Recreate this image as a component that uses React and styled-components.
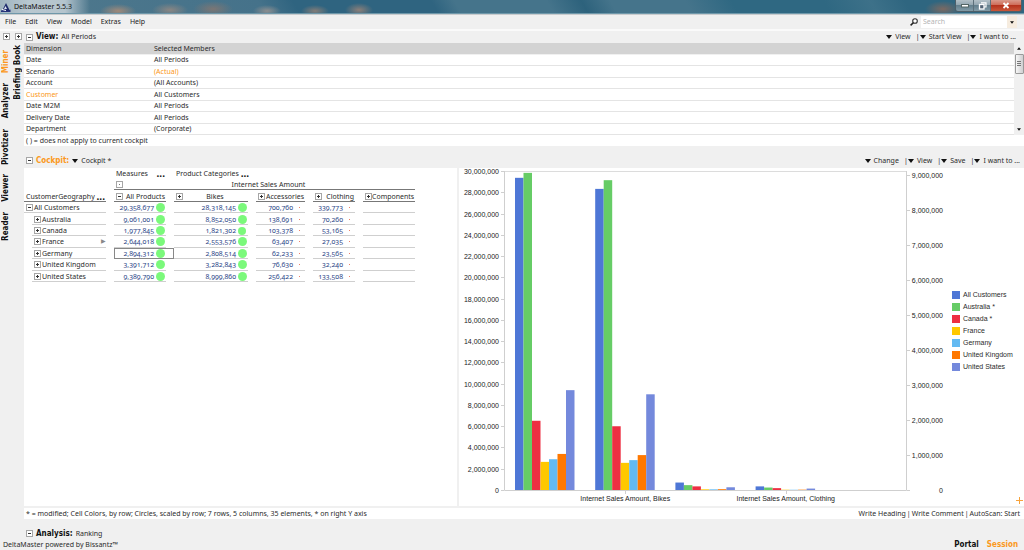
import React, { useState } from "react";
import styled, { createGlobalStyle } from "styled-components";

const GlobalStyle = createGlobalStyle`
  * {
    box-sizing: border-box;
  }

  body {
    margin: 0;
    background: #f0f0f0;
    color: #2b2b2b;
    font-family: "Noto Sans", "Open Sans", sans-serif;
    font-size: 7px;
    line-height: 10px;
  }

  button,
  input {
    margin: 0;
    padding: 0;
    border: 0;
    border-radius: 0;
    background: none;
    color: inherit;
    font: inherit;
  }
`;

const Page = styled.div`
  display: flex;
  flex-direction: column;
  min-height: 100vh;
`;

/* ---------- window frame ---------- */

const TitleBar = styled.header`
  display: flex;
  align-items: flex-start;
  justify-content: space-between;
  height: 15px;
  padding: 0 2px 0 1px;
  border-bottom: 1px solid #c9ccce;
  box-shadow: inset 0 -1px #6f98aa;
  background:
    radial-gradient(ellipse 14px 6px at 267px 11px, #8d8f90, transparent),
    radial-gradient(ellipse 14px 6px at 315px 11px, #847d78, transparent),
    radial-gradient(ellipse 14px 7px at 359px 10px, #8b7f79, transparent),
    radial-gradient(ellipse 18px 7px at 118px 11px, #a08a7a, transparent),
    radial-gradient(ellipse 18px 7px at 170px 10px, #8a8683, transparent),
    radial-gradient(ellipse 20px 8px at 213px 9px, #7c7674, transparent),
    radial-gradient(ellipse 18px 8px at 943px 9px, #7b6962, transparent),
    linear-gradient(90deg, #9fb4bf 0, #b9c8d0 30px, #b4c4cd 65px, transparent 90px),
    linear-gradient(
      60deg,
      #50798d 0,
      #45728a 230px,
      #2f6480 260px,
      #2f6480 380px,
      #45748b 400px,
      #45748b 480px,
      #2d627c 510px,
      #45748b 535px,
      #45748b 600px,
      #2f6882 640px,
      #2f6882 720px,
      #3d7189 760px,
      #2f6680 790px
    );
`;

const AppTitle = styled.div`
  display: flex;
  align-items: center;
  gap: 3px;
  height: 14px;
  color: #111;
`;

const WindowControls = styled.div`
  display: flex;
  border: 1px solid #4d5f69;
  border-top: 0;
  border-radius: 0 0 3px 3px;
  overflow: hidden;
`;

const WindowButton = styled.button`
  display: flex;
  align-items: center;
  justify-content: center;
  width: ${(p) => p.$width}px;
  height: 11px;
  border-right: 1px solid #5d707a;
  background: ${(p) =>
    p.$close
      ? "linear-gradient(#d99a8c 0, #cf6c58 45%, #b5331d 50%, #c9573a 100%)"
      : "linear-gradient(#b3c0c7 0, #93a6b0 45%, #64808e 50%, #829ba7 100%)"};

  &:last-child {
    border-right: 0;
  }
`;

const MenuBar = styled.div`
  display: flex;
  align-items: center;
  justify-content: space-between;
  height: 16px;
  padding-right: 7px;
  border-bottom: 2px solid #fafafa;
`;

const Menu = styled.nav`
  display: flex;
  gap: 9px;
  padding-left: 5px;
  color: #222;
`;

const SearchBox = styled.label`
  display: flex;
  align-items: center;
  gap: 3px;
`;

const SearchField = styled.span`
  display: flex;
  height: 12px;
  background: #fff;

  input {
    width: 86px;
    padding-left: 2px;
    outline: 0;
  }

  input::placeholder {
    color: #b4b4b4;
    opacity: 1;
  }

  button {
    display: flex;
    align-items: center;
    justify-content: center;
    width: 10px;
    background: #f6ecdf;
  }
`;

/* ---------- side rails ---------- */

const Body = styled.div`
  display: flex;
  flex: 1;
`;

const Rail = styled.nav`
  display: flex;
  flex-direction: column;
  align-items: center;
  gap: ${(p) => p.$gap}px;
  width: 12px;
  padding-top: 2px;
`;

const RailButton = styled.button`
  writing-mode: vertical-rl;
  transform: rotate(180deg);
  color: ${(p) => (p.$active ? "#fb9820" : "#111")};
  font-family: "DejaVu Sans Condensed", "DejaVu Sans", sans-serif;
  font-size: 8px;
  font-weight: bold;
  line-height: 10px;
`;

/* ---------- panels ---------- */

const Main = styled.main`
  display: flex;
  flex: 1;
  flex-direction: column;
  min-width: 0;
`;

const PanelHeader = styled.div`
  display: flex;
  align-items: center;
  gap: 3px;
  height: ${(p) => p.$height}px;
  padding: ${(p) => p.$top}px ${(p) => p.$right || 4}px 0 2px;
`;

const PanelTitle = styled.h2`
  margin: 0;
  color: ${(p) => (p.$active ? "#fb9820" : "#111")};
  font-family: "DejaVu Sans Condensed", "DejaVu Sans", sans-serif;
  font-size: 8px;
  line-height: 10px;
`;

const Toolbar = styled.div`
  display: flex;
  margin-left: auto;
`;

const DropButton = styled.button`
  display: flex;
  align-items: center;
  gap: 3px;

  & + &::before {
    content: "|";
    width: 2px;
    margin: 0 -1px 0 5px;
  }
`;

const Toggle = styled.button`
  display: inline-flex;
  width: 7px;
  height: 7px;

  svg {
    display: block;
  }
`;

const ViewArea = styled.div`
  display: flex;
  height: 92px;
`;

const ViewTable = styled.table`
  flex: 1;
  height: 92px;
  border-collapse: collapse;
  background: #fff;

  th,
  td {
    padding: 0 2px;
    border-bottom: 1px solid #e4e4e4;
    font-weight: normal;
    line-height: 9px;
    text-align: left;
  }

  th {
    height: 11px;
    border-bottom-color: #f0f0f0;
    background: #d3d3d3;
  }
`;

const Cell = styled.td`
  color: ${(p) => (p.$active ? "#fb9820" : "inherit")};
`;

const ScrollBar = styled.div`
  display: flex;
  flex-direction: column;
  align-items: center;
  width: 10px;
  background: #f0f0f0;

  button {
    display: flex;
    align-items: center;
    justify-content: center;
    width: 10px;
    height: 11px;
  }
`;

const Thumb = styled.div`
  display: flex;
  align-items: center;
  justify-content: center;
  width: 9px;
  height: 20px;
  margin-bottom: auto;
  border: 1px solid #9a9a9a;
  border-radius: 1px;
  background: linear-gradient(90deg, #f6f6f6, #cfcfd1);
`;

const NoteRow = styled.div`
  display: flex;
  justify-content: space-between;
  padding: 1px 4px 0 2px;
  background: #fff;
`;

const NoteActions = styled.div`
  display: flex;
  gap: 1px;
`;

const CockpitBody = styled.div`
  display: flex;
  flex: 1;
  border-bottom: 2px solid #f0f0f0;
  background: #fff;
`;

/* ---------- pivot table ---------- */

const PivotPane = styled.div`
  width: 435px;
  border-right: 2px solid #f0f0f0;
`;

const PivotTable = styled.table`
  width: 399px;
  height: 114px;
  border-collapse: collapse;
  table-layout: fixed;

  th,
  td {
    padding: 0 8px 0 0;
    font-weight: normal;
    line-height: 9px;
    text-align: left;
    white-space: nowrap;
  }

  thead th {
    height: 11px;
  }

  thead tr:last-child th {
    height: 12px;
  }
`;

const HeadInner = styled.div`
  display: flex;
  align-items: center;
  justify-content: ${(p) => p.$justify || "space-between"};
  padding: 0 1px 0 2px;
`;

const Rule = styled.th`
  background: linear-gradient(#777, #777) left bottom / calc(100% - 8px) 1px
    no-repeat;
`;

const RowHead = styled.th`
  background: linear-gradient(#cfcfcf, #cfcfcf) ${(p) => p.$indent}px 100% /
    calc(100% - ${(p) => p.$indent + 8}px) 1px no-repeat;
`;

const RowLabel = styled.div`
  display: flex;
  align-items: center;
  gap: 1px;
  padding-left: ${(p) => p.$indent + 2}px;

  span {
    margin-left: auto;
    color: #888;
    font-size: 6px;
  }
`;

const ValueCell = styled.td`
  background: linear-gradient(#cfcfcf, #cfcfcf) left bottom / calc(100% - 8px)
    1px no-repeat;
  outline: ${(p) => (p.$selected ? "1px solid #888" : "0")};
  outline-offset: -1px;
`;

const Value = styled.div`
  display: grid;
  grid-template-columns: 1fr 12px;
  align-items: center;
  justify-items: center;
  color: #2f4a8a;

  span {
    justify-self: end;
    font-variant-numeric: oldstyle-nums;
  }
`;

const Dot = styled.i`
  width: ${(p) => p.$size}px;
  height: ${(p) => p.$size}px;
  border-radius: ${(p) => (p.$size > 2 ? "50%" : "0")};
  background: ${(p) => (p.$size > 2 ? "#7bf97b" : "#ee7f68")};
`;

const More = styled.button`
  color: #111;
  font-size: 10px;
  font-weight: bold;
  line-height: 9px;
`;

/* ---------- chart ---------- */

const ChartPane = styled.div`
  display: flex;
  flex: 1;
  min-width: 0;
  font-family: "Liberation Sans", Arial, sans-serif;
`;

const ChartSvg = styled.svg`
  flex: 1;
  min-width: 0;
  align-self: flex-start;
  font-size: 7px;
`;

const ChartSide = styled.div`
  display: flex;
  flex-direction: column;
  width: 75px;
  padding: 0 1px 1px 3px;
`;

const Legend = styled.ul`
  display: flex;
  flex-direction: column;
  gap: 2px;
  margin: auto 0;
  padding: 0 0 4px;
  list-style: none;

  li {
    display: flex;
    align-items: center;
    gap: 3px;
    white-space: nowrap;
  }
`;

const Swatch = styled.i`
  width: 8px;
  height: 8px;
  background: ${(p) => p.$color};
`;

const AddButton = styled.button`
  align-self: flex-end;
  height: 8px;
`;

const StatusBar = styled.footer`
  display: flex;
  align-items: center;
  justify-content: space-between;
  height: 11px;
  padding: 0 6px 0 3px;
`;

const StatusModes = styled.div`
  display: flex;
  gap: 8px;
`;

const ModeButton = styled.button`
  color: ${(p) => (p.$active ? "#fb9820" : "#111")};
  font-family: "DejaVu Sans Condensed", "DejaVu Sans", sans-serif;
  font-size: 8px;
  font-weight: bold;
`;

const members = [
  ["Date", "All Periods"],
  ["Scenario", "(Actual)", "value"],
  ["Account", "(All Accounts)"],
  ["Customer", "All Customers", "name"],
  ["Date M2M", "All Periods"],
  ["Delivery Date", "All Periods"],
  ["Department", "(Corporate)"],
];

const rows = [
  ["All Customers", "29,358,677", "28,318,145", "700,760", "339,773"],
  ["Australia", "9,061,001", "8,852,050", "138,691", "70,260"],
  ["Canada", "1,977,845", "1,821,302", "103,378", "53,165"],
  ["France", "2,644,018", "2,553,576", "63,407", "27,035"],
  ["Germany", "2,894,312", "2,808,514", "62,233", "23,565"],
  ["United Kingdom", "3,391,712", "3,282,843", "76,630", "32,240"],
  ["United States", "9,389,790", "8,999,860", "256,422", "133,508"],
];

// Series marked with * are plotted against the right axis
const series = [
  { name: "All Customers", color: "#4e77d6" },
  { name: "Australia *", color: "#66cc66", right: true },
  { name: "Canada *", color: "#ee2f42", right: true },
  { name: "France", color: "#ffc800" },
  { name: "Germany", color: "#63baf2" },
  { name: "United Kingdom", color: "#ff7800" },
  { name: "United States", color: "#7489dc" },
];

const toNumber = (text) => parseInt(text.replace(/,/g, ""), 10);

function ToggleBox({ open, empty, label }) {
  return (
    <Toggle aria-label={label}>
      <svg width="7" height="7" viewBox="0 0 7 7" aria-hidden="true">
        <rect x="0.5" y="0.5" width="6" height="6" fill="#fff" stroke="#a6a6a6" />
        {empty ? (
          <path d="M3 3.5h1" stroke="#777" />
        ) : (
          <path d={open ? "M2 3.5h3" : "M2 3.5h3M3.5 2v3"} stroke="#333" />
        )}
      </svg>
    </Toggle>
  );
}

function Triangle({ width = 6, height = 4, up }) {
  return (
    <svg width={width} height={height} viewBox="0 0 6 4" aria-hidden="true">
      <path d={up ? "M0 4L3 0L6 4Z" : "M0 0H6L3 4Z"} fill="#111" />
    </svg>
  );
}

function Actions({ items }) {
  return (
    <Toolbar>
      {items.map((item) => (
        <DropButton key={item}>
          <Triangle />
          {item}
        </DropButton>
      ))}
    </Toolbar>
  );
}

function WindowHeader() {
  const [query, setQuery] = useState("");

  return (
    <>
      <TitleBar>
        <AppTitle>
          <svg width="10" height="9" viewBox="0 0 10 9" aria-hidden="true">
            <path d="M5 0L9 8H1Z" fill="#1d2a6b" />
            <path d="M4.500 3L6 6H3Z" fill="#dfe6f2" />
            <path d="M0 7.500L3 6.500L6 8L9.500 6.500V9H0Z" fill="#26337a" />
            <path d="M1 6.500L5 7.500" stroke="#fff" />
          </svg>
          DeltaMaster 5.5.3
        </AppTitle>
        <WindowControls>
          <WindowButton $width={18} aria-label="Minimize">
            <svg width="8" height="4" viewBox="0 0 8 4">
              <rect x="0.5" y="0.5" width="7" height="2.500" fill="#fff" stroke="#566" />
            </svg>
          </WindowButton>
          <WindowButton $width={17} aria-label="Restore">
            <svg width="9" height="8" viewBox="0 0 9 8">
              <path d="M3 0.800H8V5H6" fill="none" stroke="#fff" strokeWidth="1.200" />
              <rect x="1.500" y="2.500" width="4.500" height="4.500" fill="#567" stroke="#fff" strokeWidth="1.300" />
            </svg>
          </WindowButton>
          <WindowButton $width={30} $close aria-label="Close">
            <svg width="8" height="7" viewBox="0 0 8 7">
              <path d="M1.500 1L6.500 6M6.500 1L1.500 6" stroke="#fff" strokeWidth="1.800" />
            </svg>
          </WindowButton>
        </WindowControls>
      </TitleBar>
      <MenuBar>
        <Menu>
          {["File", "Edit", "View", "Model", "Extras", "Help"].map((item) => (
            <button key={item}>{item}</button>
          ))}
        </Menu>
        <SearchBox>
          <svg width="8" height="8" viewBox="0 0 8 8" aria-hidden="true">
            <circle cx="5" cy="3" r="2.300" fill="#fff" stroke="#333" strokeWidth="1.100" />
            <path d="M3.300 4.700L0.600 7.400" stroke="#222" strokeWidth="1.500" />
          </svg>
          <SearchField>
            <input
              aria-label="Search"
              placeholder="Search"
              value={query}
              onChange={(e) => setQuery(e.target.value)}
            />
            <button aria-label="Search options">
              <Triangle width={4} height={3} />
            </button>
          </SearchField>
        </SearchBox>
      </MenuBar>
    </>
  );
}

function ViewPanel() {
  return (
    <section>
      <PanelHeader $height={12} $top={0} $right={8}>
        <ToggleBox open label="Collapse view" />
        <PanelTitle>View:</PanelTitle>
        All Periods
        <Actions items={["View", "Start View", "I want to ..."]} />
      </PanelHeader>
      <ViewArea>
        <ViewTable>
          <colgroup>
            <col style={{ width: 128 }} />
            <col />
          </colgroup>
          <thead>
            <tr>
              <th>Dimension</th>
              <th>Selected Members</th>
            </tr>
          </thead>
          <tbody>
            {members.map(([name, value, mark]) => (
              <tr key={name}>
                <Cell $active={mark === "name"}>{name}</Cell>
                <Cell $active={mark === "value"}>{value}</Cell>
              </tr>
            ))}
          </tbody>
        </ViewTable>
        <ScrollBar>
          <button aria-label="Scroll up">
            <Triangle width={4} height={3} up />
          </button>
          <Thumb>
            <svg width="4" height="6" viewBox="0 0 4 6" aria-hidden="true">
              <path d="M0 0.500H4M0 2.500H4M0 4.500H4" stroke="#777" />
            </svg>
          </Thumb>
          <button aria-label="Scroll down">
            <Triangle width={4} height={3} />
          </button>
        </ScrollBar>
      </ViewArea>
      <NoteRow>( ) = does not apply to current cockpit</NoteRow>
    </section>
  );
}

function Pivot() {
  const dotSize = (row, col) => {
    if (col > 1) return 1;
    return row === 2 && col === 1 ? 8 : 9;
  };

  return (
    <PivotTable>
      <colgroup>
        {[90, 60, 82, 57, 50, 60].map((width, i) => (
          <col key={i} style={{ width }} />
        ))}
      </colgroup>
      <thead>
        <tr>
          <th />
          <th>
            <HeadInner>
              Measures <More aria-label="More measures">...</More>
            </HeadInner>
          </th>
          <th colSpan={4}>
            <HeadInner $justify="flex-start">
              Product Categories&nbsp;
              <More aria-label="More categories">...</More>
            </HeadInner>
          </th>
        </tr>
        <tr>
          <th />
          <Rule colSpan={5}>
            <HeadInner>
              <ToggleBox empty label="Levels" />
              Internet Sales Amount
              <span />
            </HeadInner>
          </Rule>
        </tr>
        <tr>
          <Rule>
            <HeadInner>
              CustomerGeography <More aria-label="More geography">...</More>
            </HeadInner>
          </Rule>
          {["All Products", "Bikes", "Accessories", "Clothing", "Components"].map(
            (name, i) => (
              <Rule key={name} scope="col">
                <HeadInner>
                  <ToggleBox open={i === 0} label={`Toggle ${name}`} />
                  {name}
                  {name === "Bikes" && <span />}
                </HeadInner>
              </Rule>
            )
          )}
        </tr>
      </thead>
      <tbody>
        {rows.map(([name, ...values], row) => {
          const indent = row === 0 ? 0 : 8;
          return (
            <tr key={name}>
              <RowHead scope="row" $indent={indent}>
                <RowLabel $indent={indent}>
                  <ToggleBox open={row === 0} label={`Toggle ${name}`} />
                  {name}
                  {name === "France" && <span>▶</span>}
                </RowLabel>
              </RowHead>
              {values.map((value, col) => (
                <ValueCell key={col} $selected={row === 4 && col === 0}>
                  <Value>
                    <span>{value}</span>
                    <Dot $size={dotSize(row, col)} />
                  </Value>
                </ValueCell>
              ))}
              <ValueCell />
            </tr>
          );
        })}
      </tbody>
    </PivotTable>
  );
}

function Chart() {
  const left = 46;
  const right = 447;
  const top = 3;
  const base = 322;
  const leftUnit = (base - top) / 30000000;
  const rightUnit = 315 / 9000000;
  const step = (right - left) / 5;
  const bar = 8.5;
  const leftTicks = Array.from({ length: 16 }, (_, i) => i * 2000000);
  const rightTicks = Array.from({ length: 10 }, (_, i) => i * 1000000);

  return (
    <ChartSvg viewBox="0 0 490 336" role="img" aria-label="Internet sales by customer geography">
      <path d={`M${left} ${top}.5H${right}`} stroke="#dcdcdc" />
      <path
        d={`M${left - 0.5} ${top}V${base + 0.5}H${right + 0.5}V${top}`}
        fill="none"
        stroke="#cfcfcf"
      />
      {leftTicks.map((tick) => {
        const y = Math.round(base - tick * leftUnit);
        return (
          <g key={tick}>
            <path d={`M${left - 4} ${y + 0.5}H${left - 1}`} stroke="#cfcfcf" />
            <text x={left - 6} y={y + 3} textAnchor="end" fill="#222">
              {tick.toLocaleString("en-US")}
            </text>
          </g>
        );
      })}
      {rightTicks.map((tick) => {
        const y = Math.round(base - tick * rightUnit);
        return (
          <g key={tick}>
            <path d={`M${right + 1} ${y + 0.5}H${right + 4}`} stroke="#cfcfcf" />
            <text x="484" y={y + 3} textAnchor="end" fill="#222">
              {tick.toLocaleString("en-US")}
            </text>
          </g>
        );
      })}
      {[1, 2, 3, 4].map((col, group) =>
        series.map((item, i) => {
          const value = toNumber(rows[i][col]);
          const height = value * (item.right ? rightUnit : leftUnit);
          return (
            <rect
              key={`${col}-${item.name}`}
              x={left + 10 + group * step + i * bar}
              y={base - height}
              width={bar}
              height={height}
              fill={item.color}
            />
          );
        })
      )}
      {[
        ["Internet Sales Amount, Bikes", 1.5],
        ["Internet Sales Amount, Clothing", 3.5],
      ].map(([label, at]) => (
        <g key={label}>
          <path
            d={`M${Math.round(left + at * step) + 0.5} ${base + 1}v3`}
            stroke="#cfcfcf"
          />
          <text
            x={left + at * step}
            y={base + 11}
            textAnchor="middle"
            fill="#222"
          >
            {label}
          </text>
        </g>
      ))}
    </ChartSvg>
  );
}

function App() {
  return (
    <Page>
      <GlobalStyle />
      <WindowHeader />
      <Body>
        <Rail $gap={10}>
          <ToggleBox label="Expand levels" />
          {["Miner", "Analyzer", "Pivotizer", "Viewer", "Reader"].map((item) => (
            <RailButton key={item} $active={item === "Miner"}>
              {item}
            </RailButton>
          ))}
        </Rail>
        <Rail $gap={5}>
          <ToggleBox label="Expand briefing book" />
          <RailButton>Briefing Book</RailButton>
        </Rail>
        <Main>
          <ViewPanel />
          <PanelHeader $height={22} $top={7}>
            <ToggleBox open label="Collapse cockpit" />
            <PanelTitle $active>Cockpit:</PanelTitle>
            <Triangle />
            Cockpit *
            <Actions items={["Change", "View", "Save", "I want to ..."]} />
          </PanelHeader>
          <CockpitBody>
            <PivotPane>
              <Pivot />
            </PivotPane>
            <ChartPane>
              <Chart />
              <ChartSide>
                <Legend>
                  {series.map((item) => (
                    <li key={item.name}>
                      <Swatch $color={item.color} />
                      {item.name}
                    </li>
                  ))}
                </Legend>
                <AddButton aria-label="Add chart">
                  <svg width="7" height="7" viewBox="0 0 7 7">
                    <path d="M3.500 0V7M0 3.500H7" stroke="#f7a33c" />
                  </svg>
                </AddButton>
              </ChartSide>
            </ChartPane>
          </CockpitBody>
          <NoteRow>
            <span>
              * = modified; Cell Colors, by row; Circles, scaled by row; 7 rows,
              5 columns, 35 elements, * on right Y axis
            </span>
            <NoteActions>
              <button>Write Heading</button>|<button>Write Comment</button>|
              <button>AutoScan: Start</button>
            </NoteActions>
          </NoteRow>
          <PanelHeader $height={20} $top={9}>
            <ToggleBox open label="Collapse analysis" />
            <PanelTitle>Analysis:</PanelTitle>
            Ranking
          </PanelHeader>
        </Main>
      </Body>
      <StatusBar>
        <span>DeltaMaster powered by Bissantz™</span>
        <StatusModes>
          <ModeButton>Portal</ModeButton>
          <ModeButton $active>Session</ModeButton>
        </StatusModes>
      </StatusBar>
    </Page>
  );
}

export default App;
